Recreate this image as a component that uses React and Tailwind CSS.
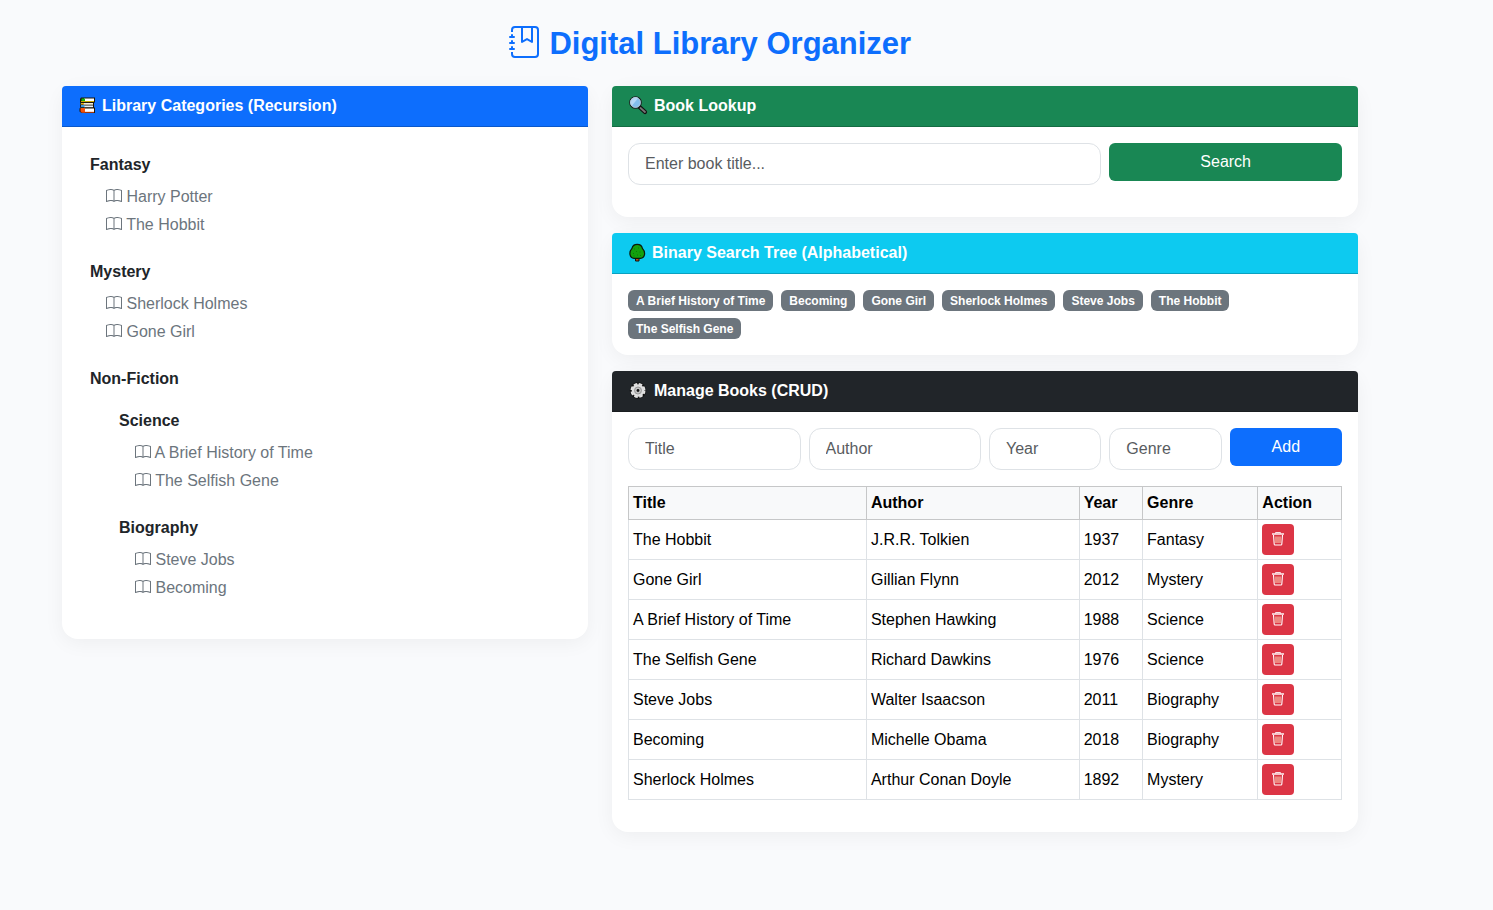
import { useState } from 'react';
import { BsBook, BsJournalBookmark } from 'react-icons/bs';

const categories = [
  { name: 'Fantasy', books: ['Harry Potter', 'The Hobbit'] },
  { name: 'Mystery', books: ['Sherlock Holmes', 'Gone Girl'] },
  {
    name: 'Non-Fiction',
    children: [
      { name: 'Science', books: ['A Brief History of Time', 'The Selfish Gene'] },
      { name: 'Biography', books: ['Steve Jobs', 'Becoming'] },
    ],
  },
];

const initialBooks = [
  { title: 'The Hobbit', author: 'J.R.R. Tolkien', year: '1937', genre: 'Fantasy' },
  { title: 'Gone Girl', author: 'Gillian Flynn', year: '2012', genre: 'Mystery' },
  { title: 'A Brief History of Time', author: 'Stephen Hawking', year: '1988', genre: 'Science' },
  { title: 'The Selfish Gene', author: 'Richard Dawkins', year: '1976', genre: 'Science' },
  { title: 'Steve Jobs', author: 'Walter Isaacson', year: '2011', genre: 'Biography' },
  { title: 'Becoming', author: 'Michelle Obama', year: '2018', genre: 'Biography' },
  { title: 'Sherlock Holmes', author: 'Arthur Conan Doyle', year: '1892', genre: 'Mystery' },
];

function BooksIcon() {
  return (
    <svg viewBox="0 0 18 18" className="h-[18px] w-[18px]" aria-hidden="true">
      <path d="M3 .500h14V5l-1 1v4l1 1v5H3.500L1.500 14.500v-3l1-1-.5-1.500.5-2L2 5V2z" fill="#1c1408" />
      <path d="M6 1.500h10v2.500H6z" fill="#fff" />
      <path d="M3.500 1.500H7v2.700H3.500z" fill="#16b50c" />
      <path d="M3 4h13v1H3z" fill="#c9a800" />
      <path d="M5.500 6H15v1.700H5.500z" fill="#f1ecd8" />
      <path d="M3 6h3v1.500H3z" fill="#e8b21a" />
      <path d="M6 8.500h9v1.700H6z" fill="#e6eef7" />
      <path d="M3 8h3.500v2.200H3z" fill="#3a96dd" />
      <path d="M6.500 11.500H16v3.500H6.500z" fill="#fff" />
      <path d="M2.500 11H7v4.500H3.500l-1-1z" fill="#f7530c" />
      <path d="M3.500 14.800H16v.9H3.500z" fill="#d8440a" />
    </svg>
  );
}

function MagnifierIcon() {
  return (
    <svg viewBox="0 0 20 20" className="h-5 w-5" aria-hidden="true">
      <path d="M11 10.500l6 5.500" stroke="#111" strokeWidth="4.200" strokeLinecap="round" />
      <path d="M12.500 12l4.500 4" stroke="#767676" strokeWidth="1.800" strokeLinecap="round" />
      <circle cx="7.500" cy="6.500" r="5.800" fill="#83beec" stroke="#1a1a1a" strokeWidth="1.100" />
      <path d="M3 9A5.200 5.200 0 0 1 10.300 2L3.700 10z" fill="#b4d8f7" />
      <circle cx="7.500" cy="6.500" r="4.900" fill="none" stroke="#b9c6d2" strokeWidth=".8" />
    </svg>
  );
}

function TreeIcon() {
  return (
    <svg viewBox="0 0 18 20" className="h-5 w-[18px]" aria-hidden="true">
      <path d="M7.500 14.500h3.500v3.500H7.500z" fill="#c24a0a" stroke="#111" />
      <path
        d="M9.200 1.300c2.800 0 4.700 1.600 5.200 4 1.600 1.700 2.500 4.200 2.100 6.400-.4 2.200-2 3.600-4 3.600H6c-2 0-3.600-1.400-4-3.600-.4-2.200.4-4.700 2-6.400.5-2.400 2.400-4 5.200-4z"
        fill="#13a10e"
        stroke="#0b1a0b"
        strokeWidth="1.200"
      />
      <path d="M6 6h1M10 5h1M8 8.500h1M5 10.500h1M11.500 9h1M9 12h1M12 12.500h1M5.500 13h1" stroke="#0c7a0a" />
    </svg>
  );
}

function GearIcon() {
  return (
    <svg viewBox="0 0 20 20" className="h-5 w-5" aria-hidden="true">
      <circle cx="10" cy="9.500" r="8.200" fill="#111" />
      <circle cx="10" cy="9.500" r="6.500" fill="none" stroke="#e2e2e2" strokeWidth="2" strokeDasharray="3.500 1.605" />
      <circle cx="10" cy="9.500" r="6.200" fill="#dedede" />
      <circle cx="10" cy="9.500" r="3.500" fill="#c4c4c4" stroke="#8a8a8a" strokeWidth=".8" />
      <circle cx="10" cy="9.500" r="1.400" fill="#111" />
    </svg>
  );
}

function TrashIcon() {
  return (
    <svg viewBox="0 0 14 14" className="h-3.5 w-3.5" fill="none" aria-hidden="true">
      <path d="M4.500 1.500V.500h5v1" stroke="#fbe3e5" />
      <path d="M1 2h12" stroke="#fff" strokeWidth="1.400" />
      <path d="M2.500 3l.7 9.200q.1.800.9.800h5.800q.8 0 .9-.8L11.500 3" stroke="#fff" strokeWidth="1.100" />
      <path d="M5 4.500v6.500M7 4.500v6.500M9 4.500v6.500" stroke="#ffd9b8" />
    </svg>
  );
}

function Card({ header, headerClass, children }) {
  return (
    <section className="rounded-2xl bg-white shadow-[0_4px_20px_rgba(0,0,0,0.05)]">
      <h2
        className={`flex h-[41px] items-center rounded-t-[4px] border-b border-black/20 px-4 pb-px font-bold text-white ${headerClass}`}
      >
        {header}
      </h2>
      {children}
    </section>
  );
}

function Category({ category }) {
  return (
    <li>
      <div className="font-bold">{category.name}</div>
      {category.books && (
        <ul className="mt-2 flex flex-col gap-1 pl-4 text-[#6c757d]">
          {category.books.map((book) => (
            <li key={book}>
              <BsBook className="inline-block align-[-2px]" aria-hidden="true" /> {book}
            </li>
          ))}
        </ul>
      )}
      {category.children && (
        <ul className="mt-[18px] flex flex-col gap-[23px] pl-[29px]">
          {category.children.map((child) => (
            <Category key={child.name} category={child} />
          ))}
        </ul>
      )}
    </li>
  );
}

function TextBox({ className, ...props }) {
  return (
    <input
      type="text"
      className={`h-[42px] w-full min-w-0 rounded-xl border border-[#dee2e6] bg-white px-4 pb-px text-[#212529] placeholder:text-[#595c5f] ${className}`}
      {...props}
    />
  );
}

const cell = 'border border-[#dee2e6] p-1';
const headCell = 'border border-[#c6c7c8] p-1 text-left font-bold';

export default function App() {
  const [books, setBooks] = useState(initialBooks);
  const sorted = books.map((b) => b.title).sort();

  const addBook = (event) => {
    event.preventDefault();
    const data = Object.fromEntries(new FormData(event.currentTarget));
    if (data.title) setBooks([...books, data]);
    event.currentTarget.reset();
  };

  return (
    <div className="min-h-screen bg-[#f9fafc] font-['Liberation_Sans',Arial,sans-serif] text-base leading-6 text-[#212529]">
      <div className="pr-[73px]">
        <main className="mx-auto max-w-[1320px] px-3 pt-6 pb-12">
          <h1 className="mb-[22px] text-center text-[31px] leading-10 font-bold text-[#0d6efd]">
            <BsJournalBookmark className="inline-block align-[-4px] text-[32px]" aria-hidden="true" /> Digital Library
            Organizer
          </h1>

          <div className="grid grid-cols-12 items-start gap-6">
            <div className="col-span-5">
              <Card
                headerClass="bg-[#0d6efd]"
                header={
                  <span className="flex items-center gap-1.5">
                    <BooksIcon />
                    Library Categories (Recursion)
                  </span>
                }
              >
                <ul className="flex flex-col gap-[23px] px-7 pt-[26px] pb-[39px]">
                  {categories.map((category) => (
                    <Category key={category.name} category={category} />
                  ))}
                </ul>
              </Card>
            </div>

            <div className="col-span-7 flex flex-col gap-4">
              <Card
                headerClass="bg-[#198754]"
                header={
                  <span className="flex items-center gap-1.5">
                    <MagnifierIcon />
                    Book Lookup
                  </span>
                }
              >
                <form
                  className="grid grid-cols-12 items-start gap-2 px-4 pt-4 pb-8"
                  onSubmit={(event) => event.preventDefault()}
                >
                  <TextBox className="col-span-8" name="query" placeholder="Enter book title..." aria-label="Book title" />
                  <button type="submit" className="col-span-4 h-[38px] rounded-md bg-[#198754] pb-px text-white">
                    Search
                  </button>
                </form>
              </Card>

              <Card
                headerClass="bg-[#0dcaf0]"
                header={
                  <span className="flex items-center gap-1.5">
                    <TreeIcon />
                    Binary Search Tree (Alphabetical)
                  </span>
                }
              >
                <ul className="flex flex-wrap gap-x-2 gap-y-[7px] p-4 text-xs font-bold text-white">
                  {sorted.map((title) => (
                    <li key={title} className="rounded-md bg-[#6c757d] px-2 pt-[5px] pb-[3px] leading-[13px]">
                      {title}
                    </li>
                  ))}
                </ul>
              </Card>

              <Card
                headerClass="bg-[#212529]"
                header={
                  <span className="flex items-center gap-1.5">
                    <GearIcon />
                    Manage Books (CRUD)
                  </span>
                }
              >
                <div className="px-4 pt-4 pb-8">
                  <form className="mb-4 grid grid-cols-12 items-start gap-2" onSubmit={addBook}>
                    <TextBox className="col-span-3" name="title" placeholder="Title" aria-label="Title" />
                    <TextBox className="col-span-3" name="author" placeholder="Author" aria-label="Author" />
                    <TextBox className="col-span-2" name="year" placeholder="Year" aria-label="Year" />
                    <TextBox className="col-span-2" name="genre" placeholder="Genre" aria-label="Genre" />
                    <button type="submit" className="col-span-2 h-[38px] rounded-md bg-[#0d6efd] pb-px text-white">
                      Add
                    </button>
                  </form>

                  <table className="w-full border-collapse text-black">
                    <thead className="bg-[#f8f9fa]">
                      <tr>
                        <th className={headCell}>Title</th>
                        <th className={headCell}>Author</th>
                        <th className={headCell}>Year</th>
                        <th className={headCell}>Genre</th>
                        <th className={headCell}>Action</th>
                      </tr>
                    </thead>
                    <tbody>
                      {books.map((book) => (
                        <tr key={book.title}>
                          <td className={cell}>{book.title}</td>
                          <td className={cell}>{book.author}</td>
                          <td className={cell}>{book.year}</td>
                          <td className={cell}>{book.genre}</td>
                          <td className={cell}>
                            <button
                              type="button"
                              aria-label={`Delete ${book.title}`}
                              className="flex h-[31px] w-8 items-center justify-center rounded bg-[#dc3545] pb-px text-sm text-white"
                              onClick={() => setBooks(books.filter((b) => b !== book))}
                            >
                              <TrashIcon />
                            </button>
                          </td>
                        </tr>
                      ))}
                    </tbody>
                  </table>
                </div>
              </Card>
            </div>
          </div>
        </main>
      </div>
    </div>
  );
}
